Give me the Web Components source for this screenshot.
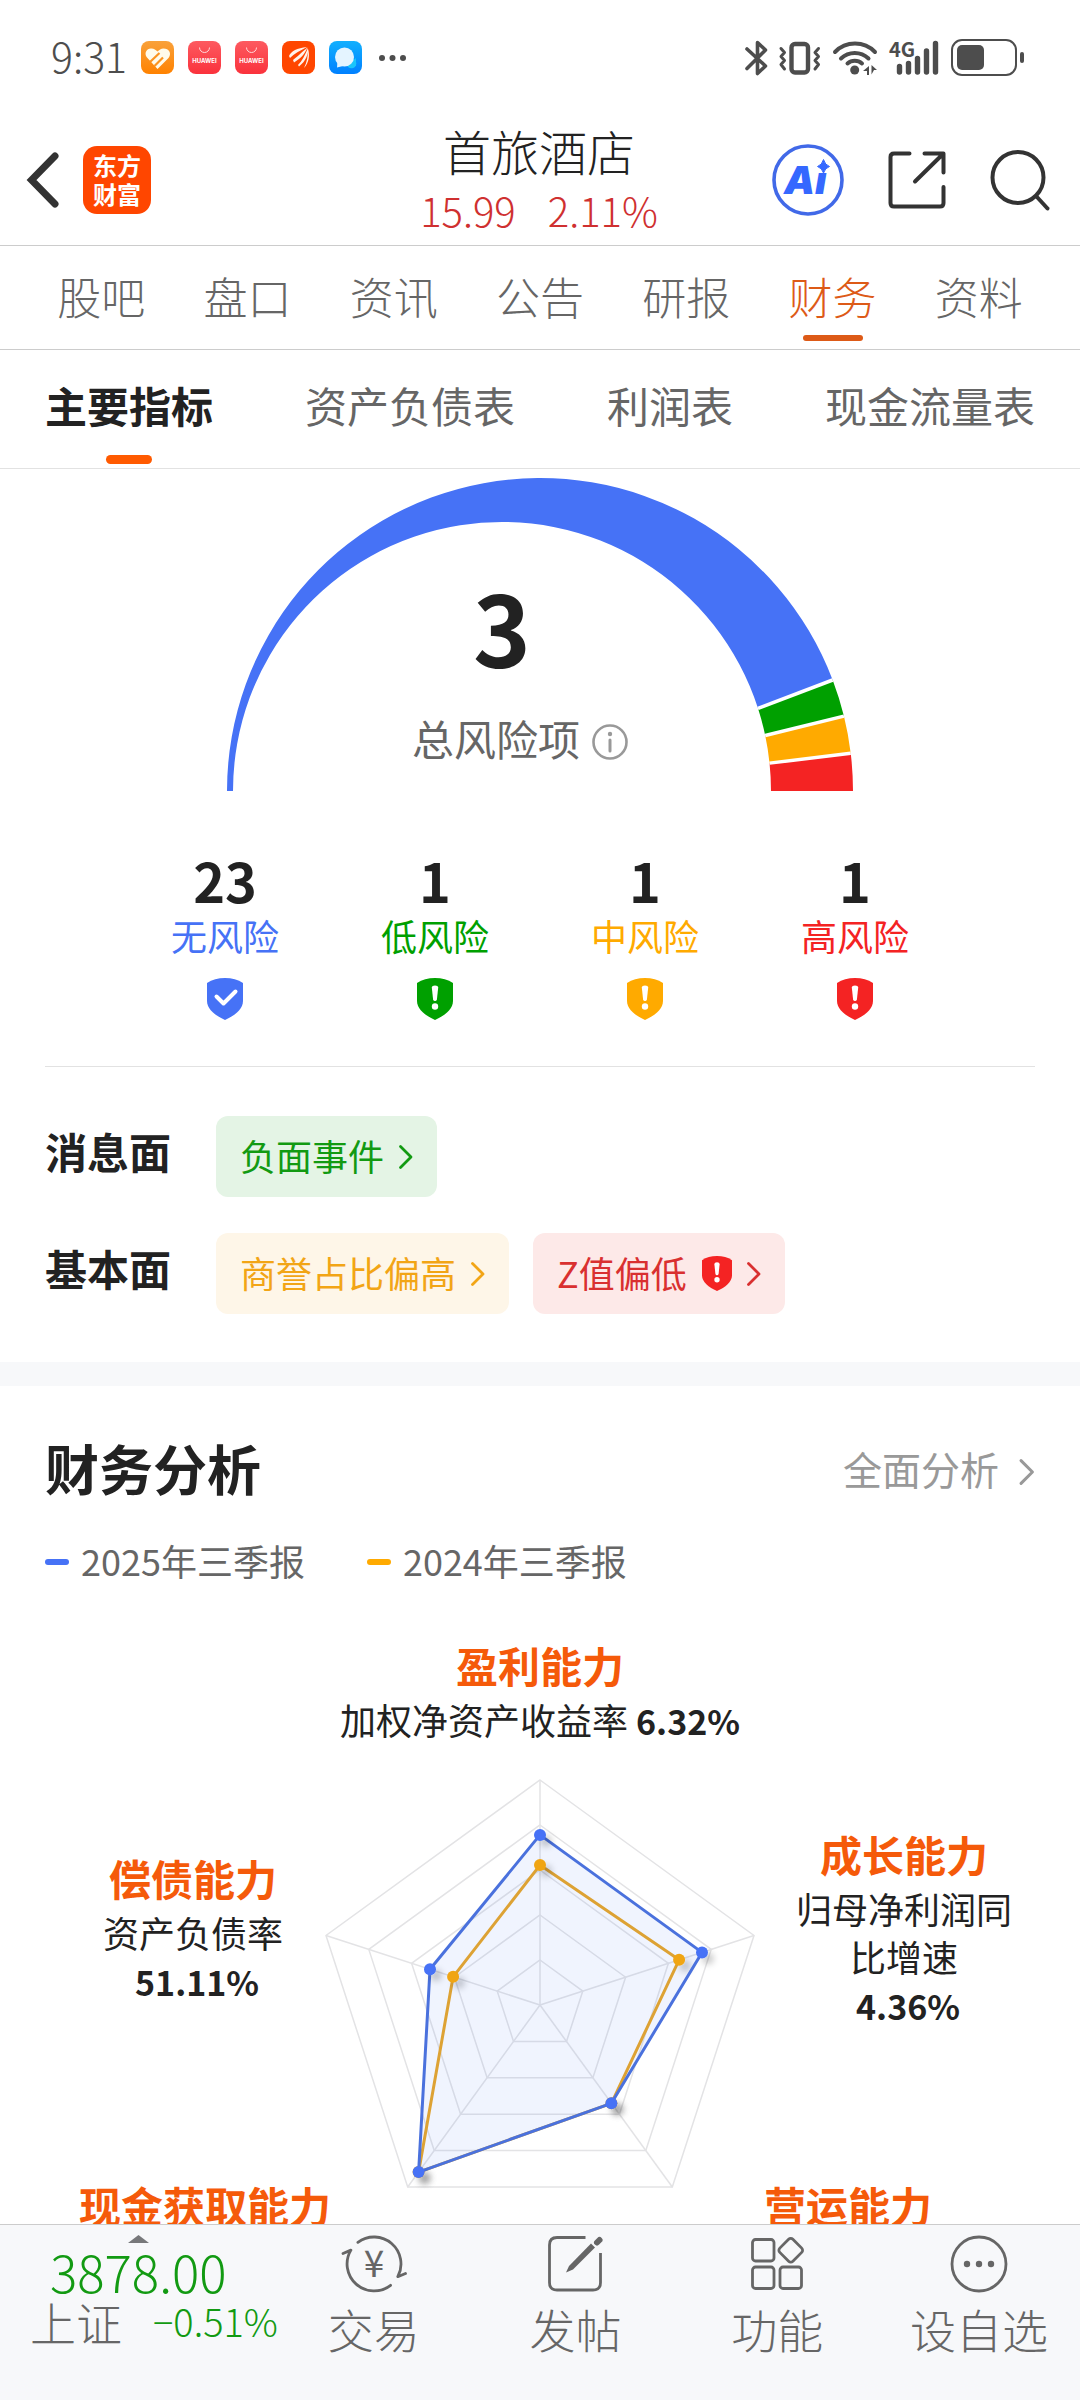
<!DOCTYPE html>
<html lang="zh-CN">
<head>
<meta charset="utf-8">
<meta name="viewport" content="width=device-width, initial-scale=1">
<title>首旅酒店</title>
<style>
  html, body { margin: 0; height: 100%; }
  body {
    font-family: "Noto Sans CJK SC", "Noto Sans", sans-serif;
    color: #222; background: #fff;
    --blue: #4672f6; --green: #00a000; --amber: #ffaa00; --red: #f42323;
    --orange: #f55a0a; --line: #ccc; --hair: #e2e2e2; --grey: #666; --soft: #f7f8fa;
  }
</style>
</head>
<body>
<stock-app>
  <status-bar slot="top"></status-bar>
  <app-header slot="top" price="15.99" change="2.11%">首旅酒店</app-header>
  <page-tabs slot="top" items="股吧,盘口,资讯,公告,研报,财务,资料" active="财务"></page-tabs>
  <sub-tabs slot="top" items="主要指标,资产负债表,利润表,现金流量表" active="主要指标"></sub-tabs>

  <risk-section>
    <risk-gauge slot="gauge" total="3" values="23,1,1,1">总风险项</risk-gauge>
    <risk-stat slot="stats" count="23" level="none">无风险</risk-stat>
    <risk-stat slot="stats" count="1" level="low">低风险</risk-stat>
    <risk-stat slot="stats" count="1" level="mid">中风险</risk-stat>
    <risk-stat slot="stats" count="1" level="high">高风险</risk-stat>
    <fact-row label="消息面">
      <risk-chip level="low">负面事件</risk-chip>
    </fact-row>
    <fact-row label="基本面">
      <risk-chip level="mid">商誉占比偏高</risk-chip>
      <risk-chip level="high" shield>Z值偏低</risk-chip>
    </fact-row>
  </risk-section>

  <finance-section heading="财务分析" more="全面分析">
    <legend-key slot="legend" style="--key: var(--blue)">2025年三季报</legend-key>
    <legend-key slot="legend" style="--key: var(--amber)">2024年三季报</legend-key>
    <radar-chart current="0.756,0.757,0.54,0.918,0.514" previous="0.622,0.65,0.54,0.918,0.406">
      <radar-label slot="top" heading="盈利能力">加权净资产收益率 <b>6.32%</b></radar-label>
      <radar-label slot="left" heading="偿债能力">资产负债率<br>&nbsp;<b>51.11%</b></radar-label>
      <radar-label slot="right" heading="成长能力">归母净利润同<br>比增速<br>&nbsp;<b>4.36%</b></radar-label>
      <radar-label slot="bottom-left" heading="现金获取能力"></radar-label>
      <radar-label slot="bottom-right" heading="营运能力"></radar-label>
    </radar-chart>
  </finance-section>

  <bottom-bar slot="bottom">
    <index-quote name="上证" value="3878.00" change="−0.51%"></index-quote>
    <nav-item icon="trade">交易</nav-item>
    <nav-item icon="post">发帖</nav-item>
    <nav-item icon="tools">功能</nav-item>
    <nav-item icon="more">设自选</nav-item>
  </bottom-bar>
</stock-app>

<script>
const BASE = `
  :host, *, *::before, *::after { box-sizing: border-box; }
  a { color: inherit; text-decoration: none; }
  button { font: inherit; color: inherit; background: none; border: 0; padding: 0; margin: 0; }
  svg { display: block; flex: none; overflow: visible; }
`;
const LEVELS = { none: '--blue', low: '--green', mid: '--amber', high: '--red' };

function define(name, css, html) {
  customElements.define(name, class extends HTMLElement {
    constructor() {
      super();
      this.attachShadow({ mode: 'open' });
    }
    connectedCallback() {
      const attr = key => this.getAttribute(key) || '';
      this.shadowRoot.innerHTML = `<style>${BASE}${css}</style>${html(attr, this)}`;
    }
  });
}

const shield = (size, mark) => `
  <svg width="${size}" height="${Math.round(size * 7 / 6)}" viewBox="0 0 36 42" aria-hidden="true">
    <path d="M18 0C25 0 31 1.500 36 5V23C36 31 28 37.500 18 42C8 37.500 0 31 0 23V5C5 1.500 11 0 18 0Z" fill="currentColor"/>
    ${mark === 'check'
      ? '<path d="M9.500 18.500L16.500 25.500L28.500 13.500" fill="none" stroke="#fff" stroke-width="4" stroke-linecap="round" stroke-linejoin="round"/>'
      : '<path d="M14.800 9.500Q15 7.500 18 7.500Q21 7.500 21.200 9.500L19.900 21.500Q19.500 23 18 23Q16.500 23 16.100 21.500Z" fill="#fff"/><circle cx="18" cy="28.500" r="3.200" fill="#fff"/>'}
  </svg>`;
const chevron = (w, h) => `
  <svg width="${w}" height="${h}" viewBox="0 0 14 24" aria-hidden="true">
    <path d="M1.500 1.500L12 12L1.500 22.500" fill="none" stroke="currentColor" stroke-width="2.800" stroke-linecap="round" stroke-linejoin="round"/>
  </svg>`;

define('stock-app', `
  :host { display: grid; grid-template-rows: auto minmax(0, 1fr) auto; height: 100vh; }
  main { overflow: hidden; }
`, () => `<div><slot name="top"></slot></div><main><slot></slot></main><slot name="bottom"></slot>`);

define('status-bar', `
  :host { display: flex; align-items: center; justify-content: space-between; height: 112px; padding: 3px 55px 0 51px; color: #4d4d4d; }
  .left { display: flex; align-items: center; gap: 14px; }
  time { font-size: 41px; line-height: 48px; font-weight: 300; margin-top: -6px; }
`, () => `
  <div class="left">
    <time>9:31</time>
    <svg width="33" height="33" viewBox="0 0 33 33"><defs><linearGradient id="a" x2="0" y2="1"><stop stop-color="#f9a13a"/><stop offset="1" stop-color="#ff8200"/></linearGradient></defs>
      <rect width="33" height="33" rx="8" fill="url(#a)"/>
      <path d="M16.500 28L6 16.500C2.500 12 6 7 10.500 7.500C13 7.500 15 9 16.500 10.500C18 9 20 7.500 22.500 7.500C28 7.500 31 12.500 27.500 17Z" fill="#fffbea"/>
      <path d="M9 21L18.500 12M13.500 25L22 16.500" stroke="#fb9420" stroke-width="2.200"/></svg>
    ${['b', 'c'].map(id => `<svg width="33" height="33" viewBox="0 0 33 33"><defs><linearGradient id="${id}" x2="0" y2="1"><stop stop-color="#fd5a60"/><stop offset="1" stop-color="#fa323c"/></linearGradient></defs>
      <rect width="33" height="33" rx="8" fill="url(#${id})"/>
      <path d="M11.500 6.500A5 5 0 0 0 21.500 6.500" fill="none" stroke="#ffd9da" stroke-width="1"/>
      <text x="16.500" y="21.500" text-anchor="middle" font-family="Inter, sans-serif" font-weight="700" font-size="6" fill="#fff">HUAWEI</text></svg>`).join('')}
    <svg width="33" height="33" viewBox="0 0 33 33"><rect width="33" height="33" rx="8" fill="#ff4600"/>
      <path d="M7 15C9 10 15 7 25 6C18 10 12 12.500 8 17ZM11 19C15 16 19 12 25.500 6.500C23 13 18 18 12 21.500ZM16 24C20 20 23 14 26 7C26.500 13 24 20 17 25.500ZM22 27C25 21 26 15 26 8C28 14 27 22 22 27Z" fill="#fff3ec"/></svg>
    <svg width="33" height="33" viewBox="0 0 33 33"><defs><linearGradient id="e" x2="0" y2="1"><stop stop-color="#12b0fe"/><stop offset="1" stop-color="#0080ff"/></linearGradient></defs>
      <rect width="33" height="33" rx="8" fill="url(#e)"/>
      <path d="M17 25H27V17Z" fill="#19c5fb"/><circle cx="22.500" cy="22.500" r="4.800" fill="#19c5fb"/>
      <circle cx="15.500" cy="16" r="9.500" fill="#e4f4ff"/><path d="M8.500 20L8 26.500L14 25Z" fill="#e4f4ff"/></svg>
    <svg width="30" height="8" viewBox="0 0 30 8"><g fill="#4d4d4d"><circle cx="6" cy="4" r="3"/><circle cx="16.500" cy="4" r="3"/><circle cx="27" cy="4" r="3"/></g></svg>
  </div>
  <svg width="280" height="40" viewBox="0 0 280 40" fill="none" stroke="#4d4d4d" stroke-linecap="round" stroke-linejoin="round">
    <path d="M2 11L20.500 28L12.500 35.500V4.500L20.500 12L2 30.500" stroke-width="3.600"/>
    <rect x="46.500" y="6" width="16.500" height="28.500" rx="3.500" stroke-width="4.400"/>
    <path d="M36 10.500L39.500 14.500L36 18.500L39.500 22.500L36 26.500L39.500 31M73.500 10.500L70 14.500L73.500 18.500L70 22.500L73.500 26.500L70 31" stroke-width="3"/>
    <path d="M90 14A28 28 0 0 1 130 14M96 20.500A20 20 0 0 1 123.500 20.500M102.500 25.500A11 11 0 0 1 117 25.500" stroke-width="4"/>
    <g fill="#4d4d4d" stroke="none">
      <circle cx="109.700" cy="32" r="4.500"/>
      <path d="M118 33L124 28V37H122V33ZM126.500 27L132 32H129L126.500 36.500Z"/>
      <text x="144" y="19" font-size="20" font-weight="700" font-family="Noto Sans CJK SC, sans-serif">4G</text>
      <rect x="212" y="7" width="27" height="25" rx="5"/>
      <rect x="275" y="14" width="4" height="11" rx="2"/>
    </g>
    <path d="M154.500 28.500V34M163.500 25.500V34M172.500 20.500V34M181.500 13V34M190.500 5.500V34" stroke-width="5.400"/>
    <rect x="207" y="2" width="64" height="35" rx="10" stroke-width="2"/>
  </svg>`);

define('app-header', `
  :host { display: grid; grid-template-columns: 1fr auto 1fr; align-items: center; height: 134px; padding: 2px 30px 0 28px; border-bottom: 1px solid var(--line); color: #333; }
  .left { display: flex; align-items: center; gap: 24px; }
  .logo { display: grid; place-content: center; width: 68px; height: 68px; border-radius: 14px; background: #ff4600; color: #fff; font-size: 24px; line-height: 29px; font-weight: 700; text-align: center; padding-bottom: 2px; }
  .title { text-align: center; }
  h1 { margin: 0; font-size: 48px; line-height: 60px; font-weight: 300; color: #222; }
  p { display: flex; justify-content: center; gap: 32px; margin: 0; font-size: 40px; line-height: 60px; font-weight: 300; color: #cf3030; }
  .right { display: flex; align-items: center; justify-content: flex-end; gap: 44px; }
`, attr => `
  <div class="left">
    <button aria-label="返回"><svg width="31" height="56" viewBox="0 0 31 56"><path d="M27 4L3.500 28L27 52" fill="none" stroke="#333" stroke-width="7" stroke-linecap="round"/></svg></button>
    <a class="logo" href="#home">东方<br>财富</a>
  </div>
  <div class="title"><h1><slot></slot></h1><p><span>${attr('price')}</span><span>${attr('change')}</span></p></div>
  <div class="right">
    <button aria-label="AI 助手"><svg width="72" height="72" viewBox="0 0 72 72">
      <circle cx="36" cy="36" r="34" fill="none" stroke="#4169e8" stroke-width="3.600"/>
      <text x="12" y="50" font-family="Inter, sans-serif" font-weight="900" font-style="italic" font-size="39" fill="#3568ff">Ai</text>
      <rect x="44" y="14" width="14" height="15" fill="#fff"/>
      <path d="M51.500 15.500Q53 21 57.500 22.500Q53 24 51.500 29Q50 24 45.500 22.500Q50 21 51.500 15.500Z" fill="#3568ff" stroke="#3568ff"/></svg></button>
    <button aria-label="分享"><svg width="58" height="58" viewBox="0 0 58 58" fill="none" stroke="#333" stroke-width="4" stroke-linecap="round" stroke-linejoin="round">
      <path d="M21.500 2.500H6Q2.500 2.500 2.500 6V52Q2.500 55.500 6 55.500H52Q55.500 55.500 55.500 52V36M36.500 2.500H55.500V21.500M55 3L27 30.500"/></svg></button>
    <button aria-label="搜索"><svg width="60" height="62" viewBox="0 0 60 62" fill="none" stroke="#333" stroke-width="4" stroke-linecap="round">
      <circle cx="28" cy="28.500" r="25.500"/><path d="M47 48L57.500 59.500"/></svg></button>
  </div>`);

define('page-tabs', `
  :host { display: block; border-bottom: 1px solid var(--line); }
  nav { display: grid; grid-auto-flow: column; grid-auto-columns: 1fr; padding: 24px 28px 8px; }
  a { display: flex; flex-direction: column; align-items: center; gap: 13px; font-size: 44px; line-height: 52px; font-weight: 300; color: var(--grey); }
  a::after { content: ""; width: 60px; height: 6px; border-radius: 3px; }
  a[aria-current] { color: #dd5a17; }
  a[aria-current]::after { background: #dd5a17; }
`, attr => `<nav>${attr('items').split(',').map(t => `<a href="#${t}"${t === attr('active') ? ' aria-current="page"' : ''}>${t}</a>`).join('')}</nav>`);

define('sub-tabs', `
  :host { display: block; border-bottom: 1px solid var(--hair); }
  nav { display: flex; justify-content: space-between; padding: 30px 45px 4px; }
  a { display: flex; flex-direction: column; align-items: center; gap: 25px; font-size: 42px; line-height: 50px; color: var(--grey); }
  a::after { content: ""; width: 46px; height: 9px; border-radius: 5px; }
  a[aria-current] { color: #222; font-weight: 700; }
  a[aria-current]::after { background: #ff5a00; }
`, attr => `<nav>${attr('items').split(',').map(t => `<a href="#${t}"${t === attr('active') ? ' aria-current="true"' : ''}>${t}</a>`).join('')}</nav>`);

define('risk-section', `
  :host { display: block; padding: 9px 45px 48px; border-bottom: 24px solid var(--soft); }
  .stats { display: flex; justify-content: center; margin-top: 58px; }
  .facts { display: grid; gap: 36px; margin-top: 46px; padding-top: 49px; border-top: 1px solid var(--hair); }
`, () => `<slot name="gauge"></slot><div class="stats"><slot name="stats"></slot></div><div class="facts"><slot></slot></div>`);

define('risk-gauge', `
  :host { display: grid; justify-items: center; }
  .arc, .centre { grid-area: 1 / 1; }
  .centre { display: flex; flex-direction: column; align-items: center; gap: 38px; padding: 97px 76px 0 0; }
  strong { font-size: 98px; line-height: 100px; font-weight: 700; }
  .name { display: flex; align-items: center; gap: 12px; padding-left: 36px; font-size: 42px; line-height: 50px; color: var(--grey); }
  .name svg { margin-top: 8px; }
`, attr => {
  // Outer and inner rims are half circles with different centres, so the band widens to the right.
  const R = 313, r = 269, cx = 315, cy = 313, ix = 277;
  const values = attr('values').split(',').map(Number);
  const sum = values.reduce((a, b) => a + b);
  const colours = ['--blue', '--green', '--amber', '--red'];
  const at = angle => {
    const dx = -Math.cos(angle), dy = -Math.sin(angle), off = cx - ix;
    const t = -off * dx + Math.sqrt(off * off * dx * dx - off * off + r * r);
    return { outer: [cx + R * dx, cy + R * dy], inner: [cx + t * dx, cy + t * dy] };
  };
  let start = 0;
  const bands = [], gaps = [];
  values.forEach((v, i) => {
    const end = start + v / sum * Math.PI, a = at(start), b = at(end);
    bands.push(`<path fill="var(${colours[i]})" d="M${a.outer}A${R} ${R} 0 0 1 ${b.outer}L${b.inner}A${r} ${r} 0 0 0 ${a.inner}Z"/>`);
    if (i < values.length - 1) gaps.push(`<path d="M${b.inner}L${b.outer}" stroke="#fff" stroke-width="3.500"/>`);
    start = end;
  });
  return `
  <svg class="arc" width="630" height="314" viewBox="0 0 630 314" aria-hidden="true">${bands.join('')}${gaps.join('')}</svg>
  <div class="centre"><strong>${attr('total')}</strong>
    <span class="name"><slot></slot><svg width="36" height="36" viewBox="0 0 36 36"><circle cx="18" cy="18" r="16.500" fill="none" stroke="#999" stroke-width="2.600"/><circle cx="18" cy="10" r="2.200" fill="#999"/><path d="M18 16V27" stroke="#999" stroke-width="3" stroke-linecap="round"/></svg></span>
  </div>`;
});

define('risk-stat', `
  :host { display: flex; flex-direction: column; align-items: center; flex: 0 1 210px; font-size: 36px; line-height: 50px; }
  strong { font-size: 54px; line-height: 60px; font-weight: 700; color: #222; }
  svg { margin-top: 18px; }
`, (attr, el) => {
  el.style.color = `var(${LEVELS[attr('level')]})`;
  return `<strong>${attr('count')}</strong><span><slot></slot></span>${shield(36, attr('level') === 'none' ? 'check' : 'alert')}`;
});

define('fact-row', `
  :host { display: flex; gap: 45px; }
  h3 { margin: 0; font-size: 42px; line-height: 70px; font-weight: 700; }
  div { display: flex; flex-wrap: wrap; gap: 24px; }
`, attr => `<h3>${attr('label')}</h3><div><slot></slot></div>`);

define('risk-chip', `
  :host { display: block; }
  button { display: flex; align-items: center; gap: 15px; height: 81px; padding: 0 24px; border-radius: 12px; font-size: 36px; background: var(--tint); color: var(--ink); }
  span { padding-bottom: 4px; }
`, (attr, el) => {
  const [tint, ink] = { low: ['#e4f4e5', '#129a12'], mid: ['#fef6e8', '#f2a516'], high: ['#fde9e8', '#d93030'] }[attr('level')];
  el.style.setProperty('--tint', tint);
  el.style.setProperty('--ink', ink);
  return `<button><span><slot></slot></span>${el.hasAttribute('shield') ? shield(30, 'alert').replace('currentColor', 'var(--red)') : ''}${chevron(14, 24)}</button>`;
});

define('finance-section', `
  :host { display: block; padding-top: 50px; }
  header { display: flex; align-items: center; justify-content: space-between; padding: 0 45px; }
  h2 { margin: 0; font-size: 54px; line-height: 64px; font-weight: 700; }
  a { display: flex; align-items: center; gap: 20px; font-size: 39px; line-height: 50px; color: #999; }
  a svg { margin-top: 8px; }
  .legend { display: flex; gap: 62px; margin-top: 35px; padding: 0 45px; }
`, attr => `<header><h2>${attr('heading')}</h2><a href="#analysis">${attr('more')}${chevron(16, 26)}</a></header>
  <div class="legend"><slot name="legend"></slot></div><slot></slot>`);

define('legend-key', `
  :host { display: flex; align-items: center; gap: 12px; font-size: 36px; line-height: 50px; color: var(--grey); }
  i { width: 24px; height: 6px; margin-top: 4px; border-radius: 3px; background: var(--key); }
`, () => `<i></i><span><slot></slot></span>`);

define('radar-label', `
  :host { display: block; text-align: center; font-size: 36px; line-height: 48px; white-space: nowrap; }
  h3 { margin: 0 0 5px; font-size: 42px; line-height: 50px; font-weight: 700; color: var(--orange); }
  ::slotted(b) { font-size: 34px; font-weight: 700; }
`, attr => `<h3>${attr('heading')}</h3><slot></slot>`);

define('radar-chart', `
  :host { display: flex; flex-direction: column; align-items: center; gap: 25px; position: relative; padding-top: 55px; }
  .pin { position: absolute; }
  .left { left: 103px; top: 268px; }
  .right { right: 68px; top: 244px; }
  .bottom-left { left: 79px; top: 595px; }
  .bottom-right { right: 148px; top: 595px; }
`, attr => {
  const R = 225;
  const point = (i, k) => {
    const a = i * Math.PI * 2 / 5;
    return [Math.sin(a) * R * k, -Math.cos(a) * R * k].map(n => Math.round(n * 10) / 10);
  };
  const poly = ks => ks.map((k, i) => point(i, k).join()).join(' ');
  const rings = [1, 2, 3, 4, 5].map(n => `<polygon points="${poly(Array(5).fill(n / 5))}"/>`).join('');
  const spokes = [0, 1, 2, 3, 4].map(i => `<path d="M0 0L${point(i, 1)}"/>`).join('');
  const series = (key, colour, line, fill) => {
    const ks = attr(key).split(',').map(Number);
    return `<polygon points="${poly(ks)}" fill="${fill}" stroke="${line}" stroke-width="3" stroke-linejoin="round"/>
      <g fill="${colour}" filter="url(#drop)">${ks.map((k, i) => { const p = point(i, k); return `<circle cx="${p[0]}" cy="${p[1]}" r="6"/>`; }).join('')}</g>`;
  };
  return `
  <slot name="top"></slot>
  <svg width="470" height="470" viewBox="-235 -235 470 470" role="img" aria-label="财务能力雷达图">
    <defs><filter id="drop" x="-20%" y="-20%" width="140%" height="140%"><feDropShadow dx="6" dy="6" stdDeviation="3" flood-color="#000" flood-opacity="0.200"/></filter></defs>
    <g fill="none" stroke="#e3e3e5" stroke-width="1.500">${rings}${spokes}</g>
    ${series('previous', 'var(--amber)', '#eba724', 'none')}
    ${series('current', 'var(--blue)', '#4a71dd', 'rgba(70,114,246,0.08)')}
  </svg>
  ${['left', 'right', 'bottom-left', 'bottom-right'].map(s => `<div class="pin ${s}"><slot name="${s}"></slot></div>`).join('')}`;
});

define('bottom-bar', `
  :host { display: block; position: relative; background: var(--soft); border-top: 1px solid var(--line); }
  nav { display: grid; grid-template-columns: 273fr repeat(4, 202fr); min-height: 175px; padding-top: 10px; }
`, () => `<nav><slot></slot></nav>`);

define('index-quote', `
  :host { display: block; min-width: 0; }
  a { display: flex; flex-direction: column; padding-left: 30px; white-space: nowrap; font-weight: 300; }
  svg { margin-left: 98px; }
  strong { padding-left: 20px; font-size: 51px; line-height: 56px; font-weight: 300; color: #129a12; }
  span { display: flex; align-items: center; gap: 31px; font-size: 46px; line-height: 44px; color: var(--grey); }
  em { font-style: normal; font-size: 38px; color: #129a12; }
`, attr => `<a href="#index"><svg width="21" height="8" viewBox="0 0 21 8"><path d="M0 8L10.500 0L21 8Z" fill="#77787a"/></svg>
  <strong>${attr('value')}</strong><span>${attr('name')}<em>${attr('change')}</em></span></a>`);

const NAV_ICONS = {
  trade: `<path d="M16.900 7.300A27 27 0 0 1 56.800 41.700L64.500 38.500M49.600 50.300A27 27 0 0 1 9.900 15.100L2 18.500"/>
    <text x="33" y="42" text-anchor="middle" font-size="37" font-weight="400" fill="#666" stroke="none" font-family="Noto Sans CJK SC, sans-serif">¥</text>`,
  post: `<path d="M43.500 2.500H15Q7.500 2.500 7.500 10V47.500Q7.500 55 15 55H51Q58.500 55 58.500 47.500V18" stroke-linecap="butt"/>
    <path d="M24 37.500L27 31L49 8.500L53 12.500L31 34.500Z" fill="#666" stroke="none"/><path d="M55 7.500L57.500 5" stroke-width="6"/>`,
  tools: `<rect x="8.500" y="4.500" width="21.500" height="21.500" rx="3"/><rect x="8.500" y="32" width="21.500" height="21.500" rx="3"/>
    <rect x="36" y="32" width="21.500" height="21.500" rx="3"/><rect x="37.500" y="6" width="18.500" height="18.500" rx="3" transform="rotate(45 46.750 15.250)"/>`,
  more: `<circle cx="33" cy="29" r="27"/><g fill="#666" stroke="none"><circle cx="21" cy="29" r="3.200"/><circle cx="33" cy="29" r="3.200"/><circle cx="45" cy="29" r="3.200"/></g>`
};
define('nav-item', `
  :host { display: block; }
  a { display: flex; flex-direction: column; align-items: center; gap: 3px; font-size: 46px; line-height: 60px; font-weight: 300; color: var(--grey); }
`, attr => `<a href="#${attr('icon')}"><svg width="66" height="60" viewBox="0 0 66 60" fill="none" stroke="#666" stroke-width="2.800" stroke-linecap="round" stroke-linejoin="round">${NAV_ICONS[attr('icon')]}</svg><span><slot></slot></span></a>`);
</script>
</body>
</html>
